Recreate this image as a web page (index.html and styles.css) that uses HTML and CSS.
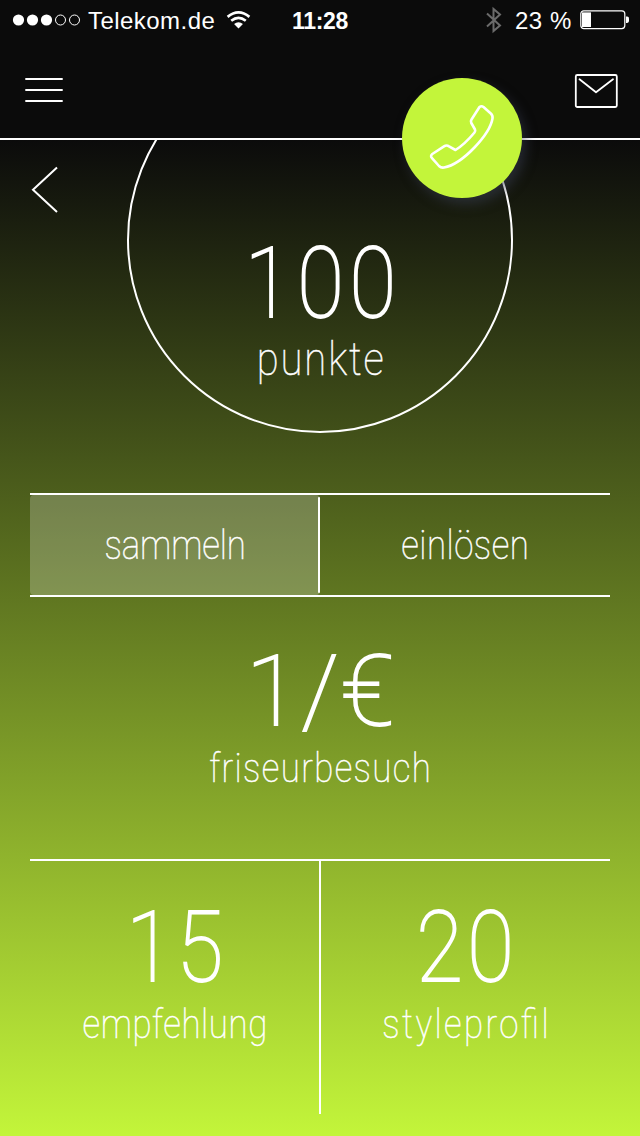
FILE: index.html
```html
<!DOCTYPE html>
<html lang="de">
<head>
    <meta charset="utf-8">
    <title>Punkte</title>
    <link rel="stylesheet" href="styles.css">
</head>
<body>
    <div class="app">
        <div class="status-bar">
            <div class="status-left">
                <svg class="signal" width="68" height="12" viewBox="0 0 68 12">
                    <g fill="#fff"><circle cx="6.5" cy="6" r="5.6"/><circle cx="20.5" cy="6" r="5.6"/><circle cx="34.5" cy="6" r="5.6"/></g>
                    <g fill="none" stroke="#fff"><circle cx="48.5" cy="6" r="5"/><circle cx="62.5" cy="6" r="5"/></g>
                </svg>
                <span class="carrier">Telekom.de</span>
                <svg class="wifi" width="25" height="18" viewBox="0 0 26 19">
                    <g fill="none" stroke="#fff" stroke-width="2.8">
                        <path d="M1.5 6.2Q13 -3.2 24.5 6.2"/>
                        <path d="M5.3 10.3Q13 4 20.7 10.3"/>
                    </g>
                    <path fill="#fff" d="M13 18.5L8.3 13.8Q13 9.7 17.7 13.8Z"/>
                </svg>
            </div>
            <div class="clock">11:28</div>
            <div class="status-right">
                <svg class="bluetooth" width="18" height="28" viewBox="0 0 18 28">
                    <path fill="none" stroke="#6b6b6b" stroke-width="2" d="M2 7.5L15 19.5L8.5 25V3L15 8.5L2 20.5"/>
                </svg>
                <span class="percent">23 %</span>
                <svg class="battery" width="50" height="20" viewBox="0 0 50 20">
                    <rect x="0.8" y="0.8" width="44" height="17.8" rx="3" fill="none" stroke="#fff" stroke-width="1.2"/>
                    <rect x="2" y="2.4" width="9" height="14.6" fill="#fff"/>
                    <path fill="#fff" d="M46 6.5h1.2q1.8 0 1.8 1.8v2.8q0 1.8-1.8 1.8H46z"/>
                </svg>
            </div>
        </div>

        <div class="header">
            <svg class="menu" width="38" height="26" viewBox="0 0 38 26">
                <path stroke="#fff" stroke-width="2" d="M0.3 2h37.4M0.3 13h37.4M0.3 24h37.4"/>
            </svg>
            <svg class="mail" width="44" height="36" viewBox="0 0 44 36">
                <g fill="none" stroke="#fff" stroke-width="1.8" stroke-linejoin="round" stroke-linecap="round">
                    <rect x="1.8" y="2" width="41" height="32" rx="1.5"/>
                    <path d="M5.5 6.2L22 19.3L39 6.2"/>
                </g>
            </svg>
            <div class="call">
                <svg width="120" height="120" viewBox="0 0 120 120">
                    <path fill="none" stroke="#fff" stroke-width="2.6" stroke-linejoin="round" d="M77.5 29Q79.5 27.5 81.5 29L88.8 35.5Q91 37.5 90.5 40.5C88 56 61 86 42 89.5Q39 90 37 88L30 80.2Q28 78 30.3 76L42 68.4Q44.5 66.7 47 68.3L53.5 72Q63 66 72.5 54.5Q73.7 53 73 51.5L69.3 45Q68.5 43 69.5 41.5Z"/>
                </svg>
            </div>
        </div>

        <div class="points">
            <svg class="back" width="30" height="50" viewBox="0 0 30 50">
                <path fill="none" stroke="#fff" stroke-width="2" d="M27 2.5L3 24.8L27 47"/>
            </svg>
            <div class="circle">
                <div class="number hundred">100</div>
                <div class="label punkte">punkte</div>
            </div>
        </div>

        <div class="tabs">
            <div class="tab active"><span class="label sammeln">sammeln</span></div>
            <div class="tab"><span class="label einloesen">einlösen</span></div>
        </div>

        <div class="visit">
            <div class="number euro">1/€</div>
            <div class="label friseur">friseurbesuch</div>
        </div>

        <div class="rewards">
            <div class="reward">
                <div class="number fifteen">15</div>
                <div class="label empfehlung">empfehlung</div>
            </div>
            <div class="reward">
                <div class="number twenty">20</div>
                <div class="label styleprofil">styleprofil</div>
            </div>
        </div>
    </div>
</body>
</html>
```
FILE: styles.css
```css
body {
    margin: 0;
    background-color: #0b0b0b;
    color: #fff;
    font-family: Roboto, "Liberation Sans", sans-serif;
}

.app {
    width: 640px;
    height: 1136px;
    overflow: hidden;
    background: linear-gradient(#0b0b0b 140px, #c3f53a 1136px);
}

.status-bar {
    display: grid;
    grid-template-columns: 1fr auto 1fr;
    align-items: center;
    height: 40px;
    padding: 0 10px 0 12px;
    background-color: #0b0b0b;
    font-family: "Liberation Sans", Arial, sans-serif;
    font-size: 24px;
}

.status-left, .status-right {
    display: flex;
    align-items: center;
}

.status-right {
    justify-content: flex-end;
}

.carrier {
    margin: 2px 11px 0 8px;
    letter-spacing: 0.45px;
}

.clock {
    margin: 2px 2px 0 0;
    font-weight: bold;
    font-size: 23px;
    letter-spacing: -0.3px;
}

.percent {
    margin: 2px 8px 0 12px;
    letter-spacing: 0.6px;
}

.header {
    position: relative;
    z-index: 1;
    display: flex;
    justify-content: space-between;
    box-sizing: border-box;
    height: 100px;
    padding: 33px 22px 0 25px;
    background-color: #0b0b0b;
    border-bottom: 2px solid #fff;
}

.menu {
    margin-top: 4px;
}

.call {
    position: absolute;
    left: 402px;
    top: 38px;
    width: 120px;
    height: 120px;
    border-radius: 50%;
    background-color: #c3f53a;
    box-shadow: 4px 6px 12px rgba(60, 65, 85, 0.5);
}

.points {
    position: relative;
    height: 353px;
    overflow: hidden;
}

.back {
    position: absolute;
    left: 30px;
    top: 25px;
}

.circle {
    display: flex;
    flex-direction: column;
    align-items: center;
    box-sizing: border-box;
    width: 386px;
    height: 386px;
    margin: -93px auto 0;
    padding-top: 195px;
    border: 2px solid #fff;
    border-radius: 50%;
}

/* text-indent balances the trailing letter-spacing so the text stays centred */
.number {
    font-size: 98px;
    font-weight: 100;
    line-height: 80px;
    white-space: nowrap;
    transform: scaleX(0.87);
    -webkit-text-stroke: 1.8px #fff;
}

.hundred {
    letter-spacing: 6.5px;
    text-indent: 6.5px;
}

.euro {
    letter-spacing: 2px;
    text-indent: 2px;
    transform: none;
}

.fifteen {
    letter-spacing: 4px;
    text-indent: 4px;
}

.twenty {
    letter-spacing: 5px;
    text-indent: 5px;
}

.label {
    font-size: 40px;
    font-weight: 100;
    line-height: 48px;
    margin-top: 13px;
    white-space: nowrap;
    transform: scaleX(0.87);
    -webkit-text-stroke: 0.5px #fff;
}

.punkte {
    font-size: 46px;
    margin-top: 11px;
    letter-spacing: 2.2px;
    text-indent: 2.2px;
}

.sammeln {
    letter-spacing: -0.1px;
}

.einloesen {
    letter-spacing: 0.6px;
    text-indent: 0.6px;
}

.friseur {
    letter-spacing: 1.6px;
    text-indent: 1.6px;
}

.empfehlung {
    letter-spacing: 0.7px;
    text-indent: 0.7px;
}

.styleprofil {
    letter-spacing: 2.8px;
    text-indent: 2.8px;
    font-feature-settings: "liga" 1;
}

.tabs {
    display: flex;
    box-sizing: border-box;
    height: 104px;
    margin: 0 30px;
    border-top: 2px solid #fff;
    border-bottom: 2px solid #fff;
}

.tab {
    position: relative;
    display: flex;
    flex: 1;
    justify-content: center;
    box-sizing: border-box;
    padding-top: 14px;
}

.active {
    background-color: rgba(255, 255, 255, 0.22);
    border-radius: 4px;
}

.active::after {
    content: "";
    position: absolute;
    top: 2px;
    right: 0;
    bottom: 2px;
    width: 2px;
    border-radius: 1px;
    background-color: #fff;
}

.visit {
    display: flex;
    flex-direction: column;
    align-items: center;
    box-sizing: border-box;
    height: 262px;
    padding-top: 55px;
}

.rewards {
    display: flex;
    height: 253px;
    margin: 0 30px;
    border-top: 2px solid #fff;
}

.reward {
    display: flex;
    flex: 1;
    flex-direction: column;
    align-items: center;
    box-sizing: border-box;
    padding-top: 47px;
}

.reward:first-child {
    border-right: 2px solid #fff;
}
```
